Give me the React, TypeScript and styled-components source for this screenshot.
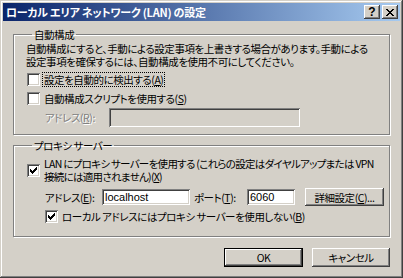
import React from "react";
import styled, { createGlobalStyle } from "styled-components";

const Global = createGlobalStyle`
  html, body { margin: 0; padding: 0; background: #d4d0c8; }
  body { font-family: "MS UI Gothic", "Noto Sans CJK JP", sans-serif; font-size: 10.5px; letter-spacing: -0.45px; color: #000; }
  * { box-sizing: border-box; }
`;

const Window = styled.div`
  width: 403px;
  height: 278px;
  background: #d4d0c8;
  padding: 3px;
  display: flex;
  flex-direction: column;
  box-shadow: inset -1px -1px #404040, inset 1px 1px #d4d0c8, inset -2px -2px #808080, inset 2px 2px #ffffff;
`;

const TitleBar = styled.div`
  height: 18px;
  background: linear-gradient(to right, #0a246a, #a6caf0);
  display: flex;
  align-items: center;
  padding: 0 2px 0 3px;
  flex-shrink: 0;
`;

const Title = styled.div`
  flex: 1;
  color: #fff;
  font-weight: bold;
  font-size: 11px;
  letter-spacing: -0.25px;
  line-height: 14px;
  white-space: nowrap;
  font-feature-settings: "palt";
`;

const CaptionButton = styled.div<{ $gap?: number }>`
  width: 16px;
  height: 14px;
  margin-left: ${(p) => p.$gap ?? 0}px;
  background: #d4d0c8;
  box-shadow: inset -1px -1px #404040, inset 1px 1px #ffffff, inset -2px -2px #808080, inset 2px 2px #d4d0c8;
  display: flex;
  align-items: center;
  justify-content: center;
  font-family: "Liberation Sans", sans-serif;
  font-weight: bold;
  font-size: 12px;
  letter-spacing: 0;
  line-height: 12px;
`;

const Body = styled.div`
  flex: 1;
  display: flex;
  flex-direction: column;
  padding: 7px 10px 0 10px;
`;

const Group = styled.fieldset<{ $h: number; $mt?: number }>`
  margin: ${(p) => p.$mt ?? 0}px 0 0 0;
  height: ${(p) => p.$h}px;
  padding: 0 0 0 12px;
  border: 1px solid #808080;
  box-shadow: inset 1px 1px #ffffff, 1px 1px #ffffff;
  display: flex;
  flex-direction: column;
  min-inline-size: 0;
`;

const Legend = styled.legend`
  margin-left: 6px;
  padding: 0 2px;
  line-height: 13px;
  font-feature-settings: "palt";
`;

const Text = styled.div`
  line-height: 13px;
  font-feature-settings: "palt";
  white-space: nowrap;
`;

const Desc = styled(Text)`
  margin-top: 1px;
`;

const Row = styled.div<{ $mt: number; $indent?: number }>`
  display: flex;
  align-items: center;
  margin-top: ${(p) => p.$mt}px;
  margin-left: ${(p) => p.$indent ?? 0}px;
  font-feature-settings: "palt";
  white-space: nowrap;
`;

const Box = styled.span`
  width: 13px;
  height: 13px;
  flex-shrink: 0;
  background: #fff;
  box-shadow: inset 1px 1px #808080, inset -1px -1px #ffffff, inset 2px 2px #404040, inset -2px -2px #d4d0c8;
  display: flex;
  align-items: center;
  justify-content: center;
`;

const Label = styled.span<{ $focus?: boolean; $tight?: boolean }>`
  margin-left: 3px;
  padding: 0 1px;
  line-height: 13px;
  letter-spacing: ${(p) => (p.$tight ? "-0.7px" : "inherit")};
  outline: ${(p) => (p.$focus ? "1px dotted #000" : "none")};
`;

const FieldLabel = styled.span<{ $w: number; $disabled?: boolean; $ml?: number }>`
  width: ${(p) => p.$w}px;
  margin-left: ${(p) => p.$ml ?? 0}px;
  flex-shrink: 0;
  color: ${(p) => (p.$disabled ? "#808080" : "#000")};
  text-shadow: ${(p) => (p.$disabled ? "1px 1px #ffffff" : "none")};
`;

const Input = styled.div<{ $w: number; $h: number; $disabled?: boolean }>`
  width: ${(p) => p.$w}px;
  height: ${(p) => p.$h}px;
  flex-shrink: 0;
  background: ${(p) => (p.$disabled ? "#d4d0c8" : "#fff")};
  box-shadow: inset 1px 1px #808080, inset -1px -1px #ffffff, inset 2px 2px #404040, inset -2px -2px #d4d0c8;
  padding: 0 3px;
  display: flex;
  align-items: center;
  font-family: "Liberation Sans", "Noto Sans CJK JP", sans-serif;
  font-size: 11px;
  letter-spacing: 0;
`;

const Button = styled.div<{ $w: number; $h: number; $def?: boolean; $ml?: number }>`
  width: ${(p) => p.$w}px;
  height: ${(p) => p.$h}px;
  margin-left: ${(p) => p.$ml ?? 0}px;
  flex-shrink: 0;
  display: flex;
  align-items: center;
  justify-content: center;
  background: #d4d0c8;
  box-shadow: ${(p) =>
    p.$def
      ? "inset 0 0 0 1px #000, inset -2px -2px #404040, inset 2px 2px #ffffff, inset -3px -3px #808080"
      : "inset -1px -1px #404040, inset 1px 1px #ffffff, inset -2px -2px #808080, inset 2px 2px #d4d0c8"};
  font-feature-settings: "palt";
  white-space: nowrap;
`;

const Footer = styled.div`
  display: flex;
  justify-content: flex-end;
  margin-top: 11px;
`;

const Check = () => (
  <svg width="9" height="9" viewBox="0 0 9 9" shapeRendering="crispEdges">
    {[2, 3, 4, 3, 2, 1, 0].map((y, x) => (
      <rect key={x} x={x + 1} y={y + 1} width="1" height="3" fill="#000" />
    ))}
  </svg>
);

const CloseGlyph = () => (
  <svg width="8" height="7" viewBox="0 0 8 7" shapeRendering="crispEdges">
    {[0, 1, 2, 3, 4, 5, 6].map((i) => (
      <React.Fragment key={i}>
        <rect x={i} y={i} width="2" height="1" fill="#000" />
        <rect x={6 - i} y={i} width="2" height="1" fill="#000" />
      </React.Fragment>
    ))}
  </svg>
);

export default function App() {
  return (
    <>
      <Global />
      <Window>
        <TitleBar>
          <Title>ローカル エリア ネットワーク (LAN) の設定</Title>
          <CaptionButton>?</CaptionButton>
          <CaptionButton $gap={2}>
            <CloseGlyph />
          </CaptionButton>
        </TitleBar>
        <Body>
          <Group $h={107}>
            <Legend>自動構成</Legend>
            <Desc>
              自動構成にすると、手動による設定事項を上書きする場合があります。手動による
              <br />
              設定事項を確保するには、自動構成を使用不可にしてください。
            </Desc>
            <Row $mt={5} $indent={1}>
              <Box />
              <Label $focus>
                設定を自動的に検出する(<u>A</u>)
              </Label>
            </Row>
            <Row $mt={6} $indent={1}>
              <Box />
              <Label>
                自動構成スクリプトを使用する(<u>S</u>)
              </Label>
            </Row>
            <Row $mt={3} $indent={19}>
              <FieldLabel $w={64} $disabled>
                アドレス(<u>R</u>):
              </FieldLabel>
              <Input $w={191} $h={19} $disabled />
            </Row>
          </Group>
          <Group $h={98} $mt={4}>
            <Legend>プロキシ サーバー</Legend>
            <Row $mt={5} $indent={1}>
              <Box>
                <Check />
              </Box>
              <Label $tight>
                LAN にプロキシ サーバーを使用する (これらの設定はダイヤルアップまたは VPN
                <br />
                接続には適用されません)(<u>X</u>)
              </Label>
            </Row>
            <Row $mt={5} $indent={19}>
              <FieldLabel $w={57}>
                アドレス(<u>E</u>):
              </FieldLabel>
              <Input $w={88} $h={16}>localhost</Input>
              <FieldLabel $w={53} $ml={4}>
                ポート(<u>T</u>):
              </FieldLabel>
              <Input $w={48} $h={16}>6060</Input>
              <Button $w={79} $h={18} $ml={10}>
                詳細設定(<u>C</u>)...
              </Button>
            </Row>
            <Row $mt={4} $indent={19}>
              <Box>
                <Check />
              </Box>
              <Label>
                ローカル アドレスにはプロキシ サーバーを使用しない(<u>B</u>)
              </Label>
            </Row>
          </Group>
          <Footer>
            <Button $w={79} $h={19} $def>
              OK
            </Button>
            <Button $w={78} $h={19} $ml={9}>
              キャンセル
            </Button>
          </Footer>
        </Body>
      </Window>
    </>
  );
}
